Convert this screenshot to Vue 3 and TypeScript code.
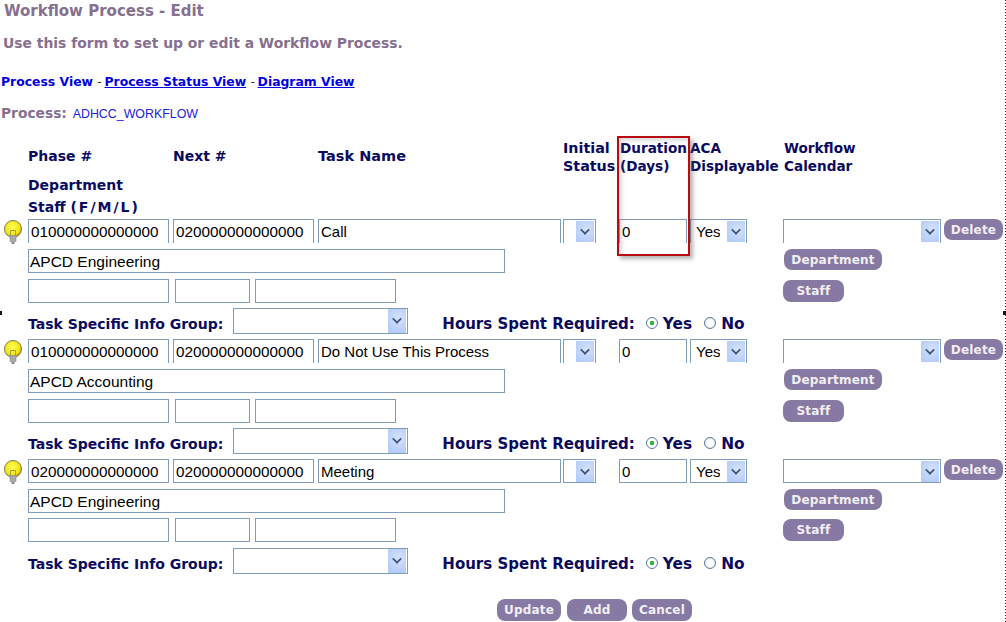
<script setup lang="ts">
interface Group { phase: string; next: string; task: string; dept: string; yes: string }
const groups: Group[] = [
  { phase: '010000000000000', next: '020000000000000', task: 'Call', dept: 'APCD Engineering', yes: 'Yes' },
  { phase: '010000000000000', next: '020000000000000', task: 'Do Not Use This Process', dept: 'APCD Accounting', yes: 'Yes' },
  { phase: '020000000000000', next: '020000000000000', task: 'Meeting', dept: 'APCD Engineering', yes: 'Yes' },
]
</script>

<template>
  <div class="page">
    <h1 class="title">Workflow Process - Edit</h1>
    <p class="intro">Use this form to set up or edit a Workflow Process.</p>
    <nav class="views">
      <a class="view active">Process View</a><span class="sep">-</span><a class="view">Process Status View</a><span class="sep">-</span><a class="view">Diagram View</a>
    </nav>
    <div class="process"><b>Process:</b> <span>ADHCC_WORKFLOW</span></div>

    <div class="heads">
      <div class="h-phase">Phase #</div>
      <div class="h-next">Next #</div>
      <div class="h-task">Task Name</div>
      <div class="h-status">Initial<br />Status</div>
      <div class="h-dur">Duration<br />(Days)</div>
      <div class="h-aca">ACA<br />Displayable</div>
      <div class="h-cal">Workflow<br />Calendar</div>
    </div>
    <div class="heads2">Department<br />Staff <span class="fml">(F/M/L)</span></div>

    <section v-for="(g, i) in groups" :key="i" class="group">
      <div class="line one">
        <svg class="bulb" viewBox="0 0 18 24" width="18" height="24" aria-hidden="true">
          <defs>
            <radialGradient :id="'b' + i" cx="45%" cy="38%" r="60%">
              <stop offset="0" stop-color="#ffff50" />
              <stop offset="0.75" stop-color="#f2e414" />
              <stop offset="1" stop-color="#b5a61a" />
            </radialGradient>
          </defs>
          <circle cx="9" cy="9" r="8.500" :fill="'url(#b' + i + ')'" stroke="#7d7a55" stroke-width="1" />
          <rect x="6" y="15.500" width="6" height="6" fill="#a8a8a8" stroke="#8a8a8a" stroke-width="0.600" />
          <path d="M7.500 22h3v2h-3z" fill="#8c8c8c" />
          <path d="M6.500 15V10.500h5V15" fill="none" stroke="#a89c40" stroke-width="1" />
        </svg>
        <div class="cell w141"><span class="val digits">{{ g.phase }}</span></div>
        <div class="cell w141 g4"><span class="val digits">{{ g.next }}</span></div>
        <div class="cell w243 g4"><span class="val">{{ g.task }}</span></div>
        <div class="cell w33 g2 sel"><i class="arrow" /></div>
        <div class="cell w68 g23"><span class="val">0</span></div>
        <div class="cell w57 g3 sel"><span class="val yes">Yes</span><i class="arrow" /></div>
        <div class="cell w158 g36 sel"><i class="arrow" /></div>
        <button class="btn delete" type="button">Delete</button>
      </div>
      <div class="line two">
        <div class="box dept"><span class="val">{{ g.dept }}</span></div>
        <button class="btn department" type="button">Department</button>
      </div>
      <div class="line three">
        <div class="box s1" />
        <div class="box s2" />
        <div class="box s3" />
        <button class="btn staff" type="button">Staff</button>
      </div>
      <div class="line four">
        <span class="lbl">Task Specific Info Group:</span>
        <div class="box grp"><i class="arrow" /></div>
        <span class="lbl hours">Hours Spent Required:</span>
        <i class="radio on" /><span class="lbl opt">{{ g.yes }}</span>
        <i class="radio off" /><span class="lbl opt">No</span>
      </div>
    </section>

    <div class="actions">
      <button class="btn update" type="button">Update</button>
      <button class="btn add" type="button">Add</button>
      <button class="btn cancel" type="button">Cancel</button>
    </div>

    <div class="callout" />
    <i class="dots" />
    <i class="mark left" />
    <i class="mark right" />
  </div>
</template>

<style>
html, body { margin: 0; background: #fff; overflow: hidden; }
</style>

<style scoped>
.page { position: relative; width: 1006px; height: 622px; overflow: hidden; font-family: "DejaVu Sans", sans-serif; font-weight: 700; background: #fff; }
.title { margin: 0; padding: 2px 0 0 4px; height: 19px; font-size: 15px; line-height: 18px; color: #86708f; font-weight: 700; }
.intro { margin: 0; padding: 13px 0 0 3px; height: 24px; font-size: 13.900px; line-height: 18px; color: #86708f; }
.views { padding: 16px 0 0 1px; height: 19px; font-size: 12.400px; line-height: 16px; display: flex; }
.view { color: #0000e0; text-decoration: underline; }
.view.active { text-decoration: none; }
.sep { font-weight: 400; margin: 0 3px 0 4.500px; color: #000; font-size: 11px; }
.process { padding: 11px 0 0 1px; height: 20px; line-height: 18px; font-size: 13.800px; color: #86708f; }
.process span { color: #2020e0; font-size: 12.400px; font-weight: 400; font-family: "Liberation Sans", sans-serif; margin-left: 1px; }
.heads { height: 34px; margin-top: 15px; font-size: 13.600px; line-height: 18px; color: #0a0a5f; display: flex; }
.heads > div { white-space: nowrap; }
.h-phase { margin-left: 28px; width: 145px; padding-top: 8px; font-size: 14px; }
.h-next { width: 145px; padding-top: 8px; font-size: 14px; }
.h-task { width: 245px; padding-top: 8px; font-size: 14.500px; }
.h-status { width: 57px; font-size: 14.300px; }
.h-dur { width: 70px; }
.h-aca { width: 94px; }
.heads2 { padding: 1px 0 0 28px; height: 45px; font-size: 14px; line-height: 22px; color: #0a0a5f; }
.fml { letter-spacing: 2px; }
.group { height: 120px; }
.line { display: flex; align-items: flex-start; }
.one { height: 30px; padding-left: 4px; }
.bulb { width: 18px; height: 24px; margin: 1px 6px 0 0; flex: none; }
.cell { box-sizing: border-box; height: 24px; border: 1px solid #7f9db9; border-bottom: 0; display: flex; align-items: center; font: 400 15px/20px "Liberation Sans", sans-serif; color: #000; position: relative; flex: none; }
.group:last-of-type .cell { border-bottom: 1px solid #7f9db9; }
.val { padding: 1px 0 0 2px; white-space: nowrap; overflow: hidden; }
.digits { font-size: 15.300px; }
.w141 { width: 141px; }
.w243 { width: 243px; }
.w33 { width: 33px; }
.w68 { width: 68px; }
.w57 { width: 57px; }
.w158 { width: 158px; }
.g4 { margin-left: 4px; }
.g2 { margin-left: 2px; }
.g23 { margin-left: 23px; }
.g3 { margin-left: 3px; }
.g36 { margin-left: 36px; }
.yes { padding-left: 5px; }
.box { box-sizing: border-box; border: 1px solid #7f9db9; height: 24px; font: 400 15.500px/22px "Liberation Sans", sans-serif; color: #000; position: relative; flex: none; }
.two { height: 30px; padding-left: 28px; }
.dept { width: 477px; }
.dept .val { display: block; padding-left: 1px; }
.three { height: 29px; padding-left: 28px; }
.s1 { width: 141px; }
.s2 { width: 75px; margin-left: 6px; }
.s3 { width: 141px; margin-left: 5px; }
.four { height: 31px; padding-left: 28px; font-size: 14px; color: #0a0a5f; }
.group:last-of-type .three { margin-top: -1px; height: 30px; }
.lbl { line-height: 18px; padding-top: 7px; white-space: nowrap; }
.grp { width: 175px; height: 26px; margin: 0 0 0 10px; }
.hours { margin-left: 34px; font-size: 15px; }
.opt { font-size: 15.400px; }
.radio { width: 12px; height: 12px; margin: 9px 5px 0 11px; border: 1px solid #5a7a99; border-radius: 50%; box-sizing: border-box; background: radial-gradient(circle, #fff 40%, #dcdcdc 100%); flex: none; }
.radio.on { background: radial-gradient(circle, #2fb52f 0 2px, #fff 2.500px); }
.opt + .radio { margin-left: 12px; }
.arrow { position: absolute; right: 1px; top: 1px; width: 18px; height: 21px; background: radial-gradient(circle at 60% 40%, #d5e2fb, #b4ccf7 80%); border-radius: 1px; }
.arrow::after { content: ""; position: absolute; left: 5px; top: 5px; width: 8px; height: 8px; border-right: 2px solid #3f5277; border-bottom: 2px solid #3f5277; transform: rotate(45deg) scale(0.850); box-sizing: border-box; }
.grp .arrow { top: 0; height: 24px; }
.grp .arrow::after { top: 6px; }
.btn { box-sizing: border-box; border: 0; padding: 0; background: #8679a3; color: #f1eff5; border-radius: 8px; font: 700 12px/16px "DejaVu Sans", sans-serif; text-align: center; flex: none; letter-spacing: 0.200px; }
.delete { width: 59px; height: 21px; margin-left: 3px; }
.department { width: 98px; height: 21px; margin-left: 279px; }
.staff { width: 61px; height: 22px; margin: 1px 0 0 387px; }
.actions { display: flex; margin: 20px 0 0 497px; }
.update { width: 64px; height: 22px; }
.add { width: 60px; height: 22px; margin-left: 6px; }
.cancel { width: 60px; height: 22px; margin-left: 5px; }
.callout { position: absolute; left: 617px; top: 136px; width: 73px; height: 120px; box-sizing: border-box; border: 2px solid #b80c12; box-shadow: 3px 3px 4px rgba(90, 90, 90, 0.450), inset 3px 3px 4px rgba(120, 120, 120, 0.250); }
.dots { position: absolute; right: 0; top: 0; width: 1px; height: 622px; background: repeating-linear-gradient(to bottom, #222 0 1px, transparent 1px 3px); }
.mark { position: absolute; top: 311px; height: 4px; background: #111; }
.mark.left { left: 0; width: 2px; }
.mark.right { left: 1003px; width: 3px; }
</style>
